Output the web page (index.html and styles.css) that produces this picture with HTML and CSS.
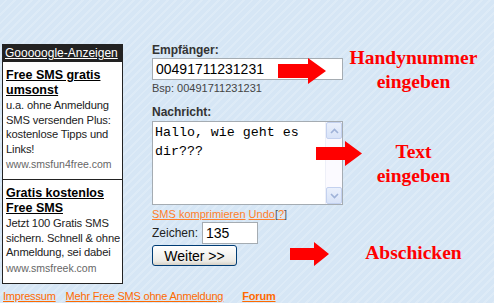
FILE: index.html
```html
<!DOCTYPE html>
<html lang="de">
<head>
    <meta charset="UTF-8">
    <meta name="viewport" content="width=device-width, initial-scale=1.0">
    <title>Free SMS versenden</title>
    <link rel="stylesheet" href="styles.css">
</head>
<body>

<div class="page">
    <div class="main">
        <!-- Werbeblock links -->
        <div class="ads">
            <div class="ads-title"><a href="#">Gooooogle-Anzeigen</a></div>
            <div class="ad">
                <a href="#" class="ad-head">Free SMS gratis umsonst</a>
                <p>u.a. ohne Anmeldung SMS versenden Plus: kostenlose Tipps und Links!</p>
                <span class="ad-url">www.smsfun4free.com</span>
            </div>
            <div class="ad ad-last">
                <a href="#" class="ad-head">Gratis kostenlos Free SMS</a>
                <p>Jetzt 100 Gratis SMS sichern. Schnell &amp; ohne Anmeldung, sei dabei</p>
                <span class="ad-url">www.smsfreek.com</span>
            </div>
        </div>

        <!-- SMS Formular -->
        <form class="sms-form">
            <label class="field-label" for="empfaenger">Empfänger:</label>
            <input type="text" id="empfaenger" class="text-input" value="00491711231231">
            <div class="hint">Bsp: 00491711231231</div>

            <label class="field-label label-msg" for="nachricht">Nachricht:</label>
            <div class="msg-box">
                <textarea id="nachricht" class="msg-input">Hallo, wie geht es dir???</textarea>
                <div class="scrollbar">
                    <div class="sb-btn">
                        <svg width="9" height="6" viewBox="0 0 9 6"><polyline points="1,5 4.5,1.5 8,5" fill="none" stroke="#9fb2d8" stroke-width="1.6"/></svg>
                    </div>
                    <div class="sb-track"></div>
                    <div class="sb-btn">
                        <svg width="9" height="6" viewBox="0 0 9 6"><polyline points="1,1 4.5,4.5 8,1" fill="none" stroke="#9fb2d8" stroke-width="1.6"/></svg>
                    </div>
                </div>
            </div>

            <div class="tools"><a href="#">SMS komprimieren</a> <a href="#">Undo</a>[<a href="#" class="help">?</a>]</div>

            <div class="count-row">
                <span>Zeichen:</span>
                <input type="text" class="count-input" value="135">
            </div>

            <button type="button" class="send-btn">Weiter &gt;&gt;</button>

            <!-- Pfeile -->
            <svg class="arrow arrow-1" width="48" height="26" viewBox="0 0 48 26"><polygon points="0,6 30,6 30,0 48,13 30,26 30,20 0,20" fill="#f00"/></svg>
            <svg class="arrow arrow-2" width="46" height="25" viewBox="0 0 46 25"><polygon points="0,6 29,6 29,0 46,12.5 29,25 29,19 0,19" fill="#f00"/></svg>
            <svg class="arrow arrow-3" width="39" height="24" viewBox="0 0 39 24"><polygon points="0,6 24,6 24,0 39,12 24,24 24,18 0,18" fill="#f00"/></svg>
        </form>

        <!-- Hinweise -->
        <div class="hints">
            <div class="hint-red hint-1">Handynummer<br>eingeben</div>
            <div class="hint-red hint-2">Text<br>eingeben</div>
            <div class="hint-red hint-3">Abschicken</div>
        </div>
    </div>

    <div class="footer">
        <a href="#">Impressum</a>
        <a href="#">Mehr Free SMS ohne Anmeldung</a>
        <a href="#" class="forum">Forum</a>
    </div>
</div>

</body>
</html>
```

FILE: styles.css
```css
* {
    margin: 0;
    padding: 0;
    box-sizing: border-box;
}

body {
    font-family: 'Liberation Sans', Arial, sans-serif;
    font-size: 12px;
    color: #222;
    background-color: #d6e6f5;
    background-image: repeating-linear-gradient(-45deg, rgba(255, 255, 255, 0.18) 0 2px, transparent 2px 6px);
    height: 303px;
    overflow: hidden;
}

.main {
    display: flex;
    align-items: flex-start;
    padding: 44px 0 0 2px;
}

/* Werbung */
.ads {
    width: 121px;
    height: 240px;
    overflow: hidden;
    background: #fff;
    border: 1px solid #222;
}

.ads-title {
    background: #222;
    height: 17px;
    padding: 1px 2px;
    line-height: 15px;
}

.ads-title a {
    color: #fff;
    font-size: 12px;
}

.ad {
    padding: 6px 0 7px 3px;
    border-bottom: 1px solid #222;
}

.ad-last {
    border-bottom: none;
}

.ad-head {
    display: block;
    color: #000;
    font-weight: bold;
    font-size: 12.5px;
    line-height: 15px;
}

.ad p {
    color: #222;
    font-size: 11.2px;
    letter-spacing: -0.15px;
    line-height: 14.5px;
}

.ad-url {
    display: block;
    color: #666;
    font-size: 10.5px;
    line-height: 16px;
}

/* Formular */
.sms-form {
    position: relative;
    width: 191px;
    margin-left: 29px;
    margin-top: -1px;
}

.field-label {
    display: block;
    font-weight: bold;
    font-size: 12px;
    line-height: 15px;
    color: #333;
}

.text-input {
    display: block;
    width: 191px;
    height: 22px;
    border: 1px solid #a5acb2;
    padding: 0 3px;
    font-family: 'Liberation Sans', Arial, sans-serif;
    font-size: 14px;
    color: #000;
    background: #fff;
}

.hint {
    font-size: 11px;
    color: #444;
    line-height: 14px;
    margin-top: 1px;
}

.label-msg {
    margin-top: 10px;
    margin-bottom: 1px;
}

.msg-box {
    display: flex;
    width: 191px;
    height: 84px;
    border: 1px solid #a5acb2;
    background: #fff;
}

.msg-input {
    flex: 1;
    border: none;
    outline: none;
    padding: 1px 2px;
    font-family: 'Liberation Mono', 'Courier New', monospace;
    font-size: 13.3px;
    line-height: 19px;
    color: #000;
    resize: none;
    overflow: hidden;
    background: #fff;
}

.scrollbar {
    display: flex;
    flex-direction: column;
    width: 17px;
    background: #fbfaff;
    border-left: 1px solid #eef0f8;
}

.sb-btn {
    height: 17px;
    display: flex;
    align-items: center;
    justify-content: center;
    background: linear-gradient(#eaf0fc, #d8e3f8);
    border: 1px solid #c3d1ef;
    border-radius: 2px;
}

.sb-track {
    flex: 1;
}

.tools {
    font-size: 11px;
    line-height: 14px;
    margin-top: 2px;
    color: #555;
}

.tools a {
    color: #ff7f2a;
}

.count-row {
    display: flex;
    align-items: center;
    gap: 4px;
    margin-top: 1px;
    font-size: 12px;
}

.count-input {
    width: 56px;
    height: 22px;
    border: 1px solid #a5acb2;
    padding: 0 3px;
    font-family: 'Liberation Sans', Arial, sans-serif;
    font-size: 14px;
    color: #000;
}

.send-btn {
    display: block;
    width: 85px;
    height: 21px;
    margin-top: 1px;
    border: 1px solid #003c74;
    border-radius: 3px;
    background: linear-gradient(#ffffff, #ecebe6 80%, #d6d0c5);
    font-family: 'Liberation Sans', Arial, sans-serif;
    font-size: 14px;
    color: #000;
    cursor: pointer;
}

.arrow {
    position: absolute;
}

.arrow-1 {
    left: 126px;
    top: 15px;
}

.arrow-2 {
    left: 164px;
    top: 98px;
}

.arrow-3 {
    left: 138px;
    top: 199px;
}

/* Rote Hinweise */
.hints {
    width: 151px;
    padding-right: 10px;
    text-align: center;
}

.hint-red {
    color: #f00;
    font-family: 'Liberation Serif', 'Times New Roman', serif;
    font-weight: bold;
    font-size: 19.5px;
    line-height: 24px;
}

.hint-1 {
    margin-top: 2px;
}

.hint-2 {
    margin-top: 46px;
}

.hint-3 {
    margin-top: 53px;
}

/* Footer */
.footer {
    display: flex;
    gap: 10px;
    padding: 6px 0 0 3px;
    font-size: 11px;
    letter-spacing: -0.2px;
}

.footer a {
    color: #ff6a00;
}

.footer .forum {
    margin-left: 9px;
    font-weight: bold;
}
```
